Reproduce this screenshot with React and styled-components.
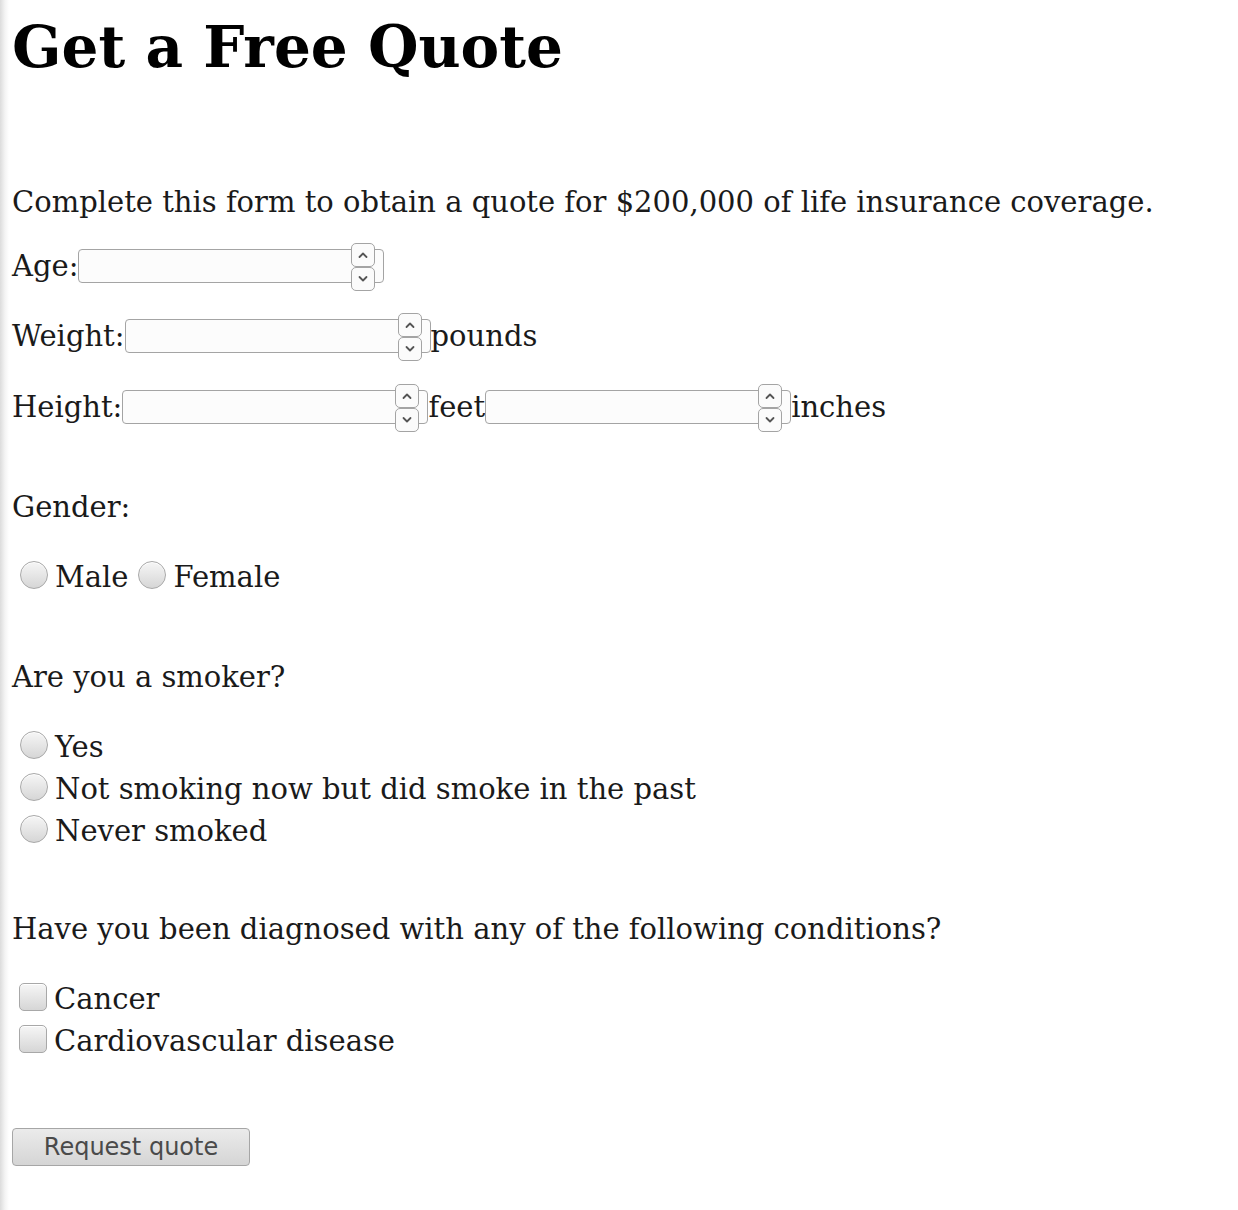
import React from 'react'
import styled, { createGlobalStyle } from 'styled-components'

const Global = createGlobalStyle`
html {
  background: linear-gradient(to right, #dcdcdc 0px, #f4f4f4 5px, #ffffff 9px);
  min-height: 100%;
}
body {
  margin: 0;
  padding: 0 12px;
  font-family: "DejaVu Serif", serif;
  font-size: 29px;
  color: #1a1a1a;
}
`;

const Page = styled.form`
display: flex;
flex-direction: column;
align-items: flex-start;
padding-bottom: 40px;
`;

const Title = styled.h1`
margin: 0;
padding-top: 14px;
font-size: 58px;
line-height: 66px;
font-weight: bold;
color: #000;
`;

const Line = styled.div`
display: flex;
align-items: center;
height: 42px;
line-height: 42px;
margin-top: ${(p) => p.top || 0}px;
white-space: nowrap;
`;

const Box = styled.span`
position: relative;
display: inline-block;
width: 306px;
height: 34px;
box-sizing: border-box;
border: 1px solid #a4a4a4;
border-radius: 4px;
background: #fcfcfc;
`;

const Spin = styled.span`
position: absolute;
right: 8px;
top: -7px;
display: flex;
flex-direction: column;
`;

const SpinButton = styled.span`
display: flex;
align-items: center;
justify-content: center;
width: 24px;
height: 24px;
box-sizing: border-box;
border: 1px solid #a4a4a4;
border-radius: 5px;
background: #fbfbfb;
`;

const Chevron = ({ up }) => (
  <svg width="12" height="8" viewBox="0 0 12 8">
    <path
      d={up ? 'M2.5 6 L6 2.5 L9.5 6' : 'M2.5 2 L6 5.5 L9.5 2'}
      fill="none"
      stroke="#555"
      strokeWidth="1.8"
      strokeLinecap="round"
      strokeLinejoin="round"
    />
  </svg>
);

const NumberField = () => (
  <Box>
    <Spin>
      <SpinButton><Chevron up /></SpinButton>
      <SpinButton><Chevron /></SpinButton>
    </Spin>
  </Box>
);

const Option = styled.label`
display: inline-flex;
align-items: center;
margin-right: ${(p) => p.gap || 0}px;
`;

const Mark = styled.span`
display: inline-block;
width: 28px;
height: 28px;
box-sizing: border-box;
margin: 0 ${(p) => (p.square ? 7 : 7)}px 4px ${(p) => (p.square ? 7 : 8)}px;
border: 1px solid #a8a8a8;
border-radius: ${(p) => (p.square ? '5px' : '50%')};
background: linear-gradient(to bottom, #f6f6f6, #d6d6d6);
box-shadow: inset 0 1px 0 #ffffff;
`;

const SubmitButton = styled.button`
margin-top: 66px;
width: 238px;
height: 38px;
padding: 0;
border: 1px solid #a6a6a6;
border-radius: 4px;
background: linear-gradient(to bottom, #ebebeb, #d5d5d5);
font-family: "DejaVu Sans", sans-serif;
font-size: 24px;
color: #4a4a4a;
`;

export default function App() {
  return (
    <>
      <Global />
      <Page>
        <Title>Get a Free Quote</Title>
        <Line top={101}>Complete this form to obtain a quote for $200,000 of life insurance coverage.</Line>
        <Line top={22}>Age:<NumberField /></Line>
        <Line top={28}>Weight:<NumberField />pounds</Line>
        <Line top={29}>Height:<NumberField />feet<NumberField />inches</Line>
        <Line top={58}>Gender:</Line>
        <Line top={28}>
          <Option gap={2}><Mark />Male</Option>
          <Option><Mark />Female</Option>
        </Line>
        <Line top={58}>Are you a smoker?</Line>
        <Line top={28}><Option><Mark />Yes</Option></Line>
        <Line><Option><Mark />Not smoking now but did smoke in the past</Option></Line>
        <Line><Option><Mark />Never smoked</Option></Line>
        <Line top={56}>Have you been diagnosed with any of the following conditions?</Line>
        <Line top={28}><Option><Mark square />Cancer</Option></Line>
        <Line><Option><Mark square />Cardiovascular disease</Option></Line>
        <SubmitButton type="button">Request quote</SubmitButton>
      </Page>
    </>
  )
}
